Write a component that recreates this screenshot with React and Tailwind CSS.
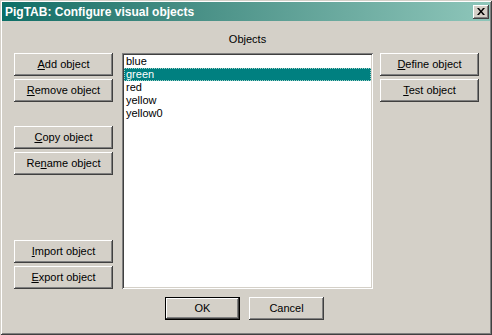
const font = { fontFamily: '"Liberation Sans", Arial, sans-serif' };

const raised =
    'shadow-[inset_-1px_-1px_#404040,inset_1px_1px_#ffffff,inset_-2px_-2px_#808080,inset_2px_2px_#d4d0c8]';

const Btn = ({ children, className = '' }) => (
    <div className={`h-[23px] flex items-center justify-center bg-[#d4d0c8] text-[11px] text-black leading-none ${raised} ${className}`}>
        <span>{children}</span>
    </div>
);

const items = ['blue', 'green', 'red', 'yellow', 'yellow0'];

const App = () => {
    return (
        <div
            className="w-[492px] h-[335px] bg-[#d4d0c8] p-[2px] flex flex-col shadow-[inset_1px_1px_#d4d0c8,inset_-1px_-1px_#404040,inset_2px_2px_#ffffff,inset_-2px_-2px_#808080]"
            style={font}
        >
            {/* Title bar */}
            <div className="h-[19px] flex items-center justify-between pl-[3px] pr-[1px] bg-gradient-to-r from-[#0a6e66] to-[#8ec6ba]">
                <span className="text-white font-bold text-[12px] leading-none">PigTAB: Configure visual objects</span>
                <div className={`w-[16px] h-[14px] bg-[#d4d0c8] flex items-center justify-center ${raised}`}>
                    <svg width="8" height="7" viewBox="0 0 8 7">
                        <path d="M0 0h2l2 2.5L6 0h2L5 3.5L8 7H6L4 4.5L2 7H0l3-3.5z" fill="#000" />
                    </svg>
                </div>
            </div>

            {/* Body */}
            <div className="flex items-start pl-[12px] pt-[12px]">
                <div className="w-[99px] mt-[20px] flex flex-col">
                    <Btn><u>A</u>dd object</Btn>
                    <Btn className="mt-[3px]"><u>R</u>emove object</Btn>
                    <Btn className="mt-[24px]"><u>C</u>opy object</Btn>
                    <Btn className="mt-[3px]">Re<u>n</u>ame object</Btn>
                    <Btn className="mt-[65px]"><u>I</u>mport object</Btn>
                    <Btn className="mt-[3px]"><u>E</u>xport object</Btn>
                </div>

                <div className="w-[251px] ml-[9px] flex flex-col">
                    <div className="h-[13px] text-center text-[11px] leading-[13px] text-black">Objects</div>
                    <div className="mt-[7px] h-[236px] bg-white p-[2px] shadow-[inset_1px_1px_#808080,inset_-1px_-1px_#ffffff,inset_2px_2px_#404040,inset_-2px_-2px_#d4d0c8]">
                        {items.map((item) => (
                            <div
                                key={item}
                                className={
                                    item === 'green'
                                        ? 'h-[13px] pl-[1px] text-[11px] leading-[11px] text-white bg-[#008080] border border-dotted border-[#9fd0c8]'
                                        : 'h-[13px] pl-[2px] text-[11px] leading-[13px] text-black'
                                }
                            >
                                {item}
                            </div>
                        ))}
                    </div>
                </div>

                <div className="w-[99px] ml-[7px] mt-[20px] flex flex-col">
                    <Btn><u>D</u>efine object</Btn>
                    <Btn className="mt-[3px]"><u>T</u>est object</Btn>
                </div>
            </div>

            {/* Footer */}
            <div className="flex pt-[8px] pl-[163px]">
                <div className="w-[75px] h-[23px] border border-black">
                    <div className={`h-full flex items-center justify-center text-[11px] leading-none ${raised}`}>OK</div>
                </div>
                <Btn className="w-[75px] ml-[9px]">Cancel</Btn>
            </div>
        </div>
    );
};

export default App;
